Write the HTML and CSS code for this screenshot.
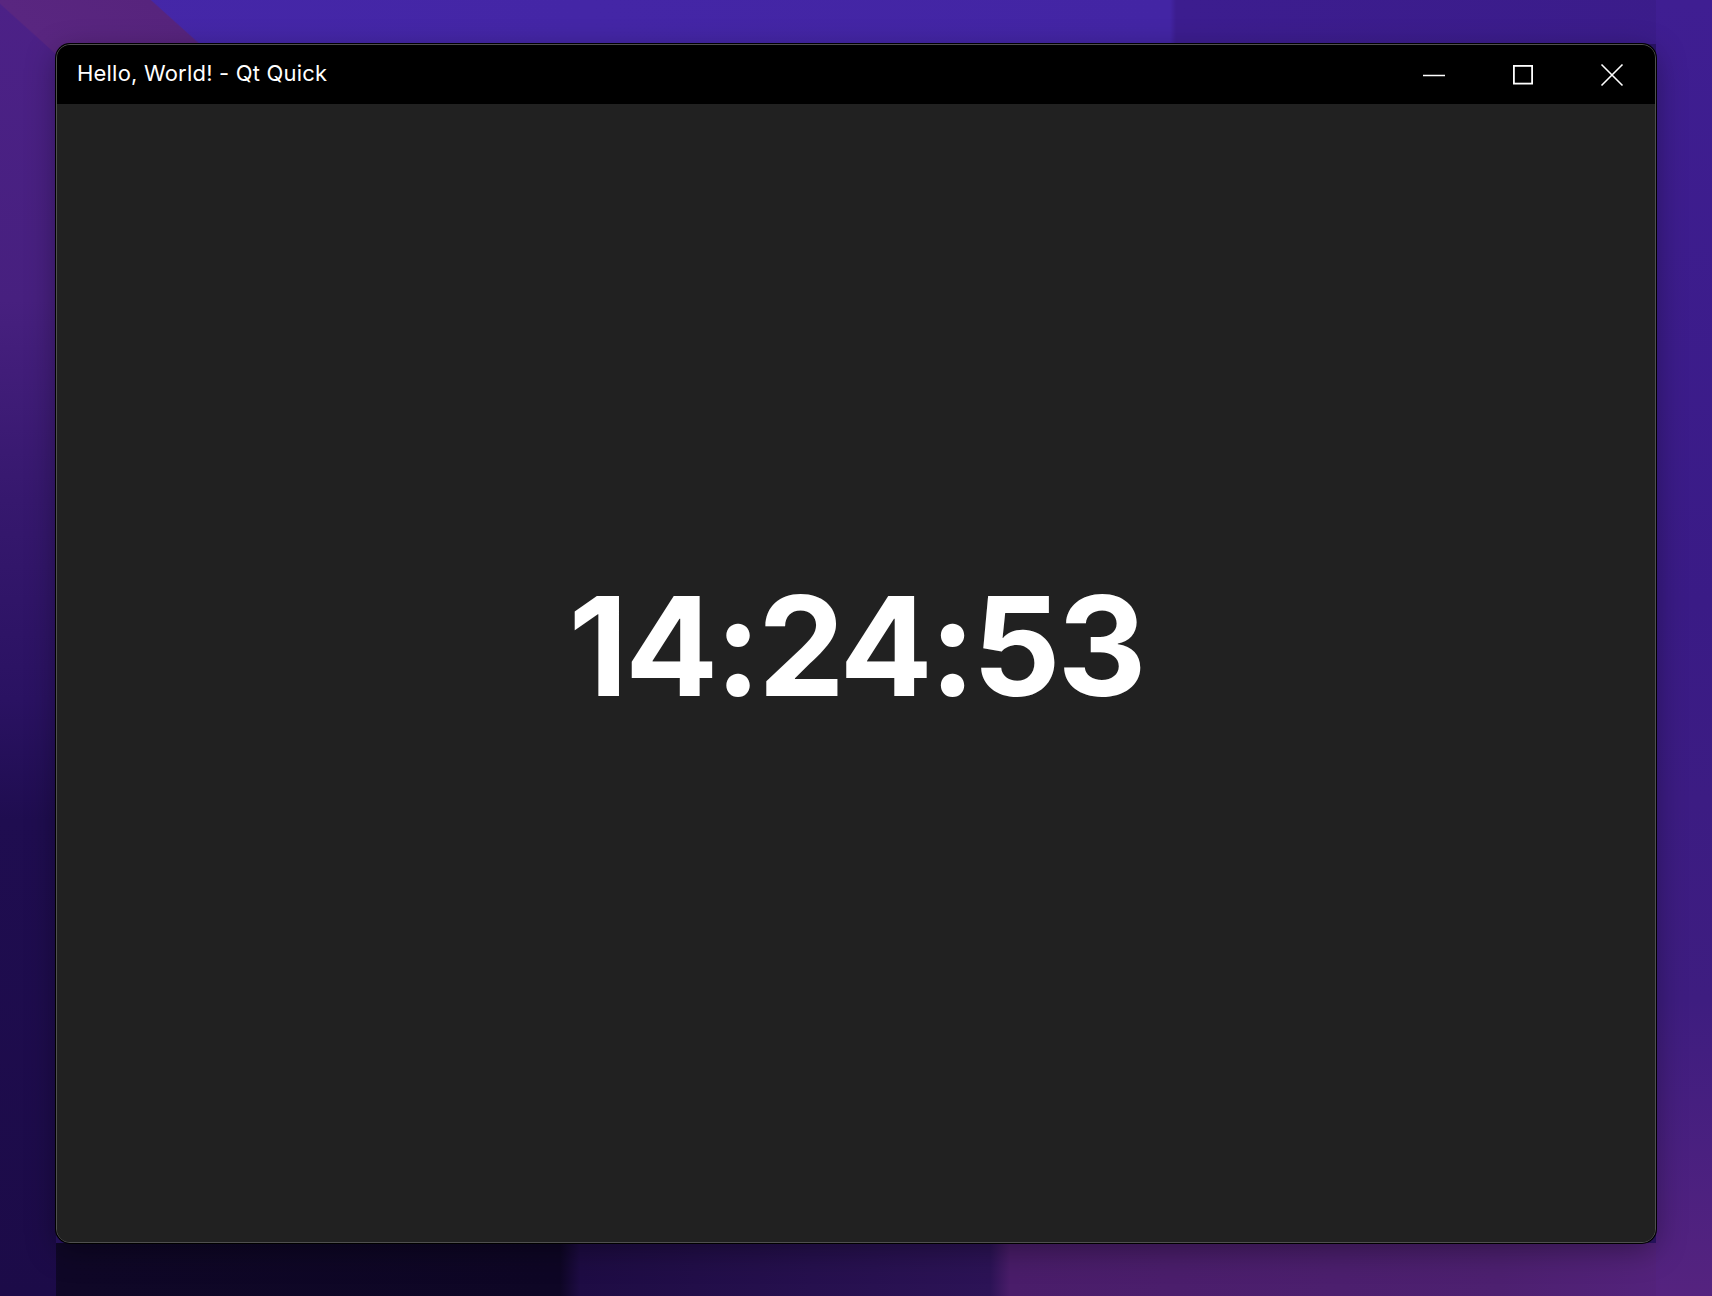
FILE: index.html
```html
<!DOCTYPE html>
<html lang="en">
<head>
<meta charset="utf-8">
<title>Hello, World! - Qt Quick</title>
<link rel="stylesheet" href="styles.css">
</head>
<body>
<div class="desktop">
  <div class="window">
    <div class="titlebar">
      <div class="title">Hello, World! - Qt Quick</div>
      <div class="controls">
        <div class="ctrl">
          <svg width="24" height="24" viewBox="0 0 24 24"><path d="M1 12.5 H23" stroke="#fff" stroke-width="1.6" fill="none"/></svg>
        </div>
        <div class="ctrl">
          <svg width="24" height="24" viewBox="0 0 24 24"><rect x="2.9" y="2.9" width="18.2" height="17.7" stroke="#fff" stroke-width="1.8" fill="none"/></svg>
        </div>
        <div class="ctrl">
          <svg width="24" height="24" viewBox="0 0 24 24"><path d="M1.5 1.5 L22.5 22.5 M22.5 1.5 L1.5 22.5" stroke="#fff" stroke-width="1.6" fill="none"/></svg>
        </div>
      </div>
    </div>
    <div class="content">
      <div class="clock">14:24:53</div>
    </div>
  </div>
</div>
</body>
</html>
```

FILE: styles.css
```css
html, body {
  margin: 0;
  padding: 0;
}

body {
  width: 1712px;
  height: 1296px;
  overflow: hidden;
  font-family: Inter, "Liberation Sans", Arial, sans-serif;
}

.desktop {
  box-sizing: border-box;
  width: 1712px;
  height: 1296px;
  padding: 44px 56px 53px 56px;
  background:
    linear-gradient(42deg, rgba(0,0,0,0) 0, rgba(0,0,0,0) 40%, #592680 40.4%, #57247d 68.6%, rgba(0,0,0,0) 69%) 0 0 / 320px 200px no-repeat,
    linear-gradient(180deg, #4c2187 0, #47207f 300px, #36186e 500px, #2a1262 700px, #1f0d50 820px, #1c0b48 100%) 0 0 / 56px 100% no-repeat,
    linear-gradient(180deg, #3f1e92 0, #3a1b86 600px, #3e1d80 1000px, #55237f 100%) 100% 0 / 56px 100% no-repeat,
    linear-gradient(90deg, #1d0c48 0, #0f0727 60px, #0e0625 560px, #1e0c44 580px, #2c1356 990px, #4a1d6a 1010px, #4d2070 1500px, #55237f 100%) 0 100% / 100% 53px no-repeat,
    linear-gradient(90deg, #4527a8 0, #4325a4 1170px, #3c1d8f 1176px, #3b1c8a 100%) 0 0 / 100% 44px no-repeat,
    #2a1466;
}

.window {
  box-sizing: border-box;
  width: 1600px;
  height: 1199px;
  display: flex;
  flex-direction: column;
  border: 1px solid #4f4f4f;
  border-radius: 14px;
  box-shadow: 0 0 0 1px #000, 0 8px 30px rgba(0,0,0,0.35);
  overflow: hidden;
  background: #212121;
}

.titlebar {
  height: 59px;
  flex: 0 0 59px;
  background: #000;
  display: flex;
  align-items: center;
  justify-content: space-between;
  padding-left: 20px;
}

.title {
  color: #fff;
  font-size: 22px;
  line-height: 1;
  letter-spacing: 0.2px;
  padding-bottom: 3px;
}

.controls {
  display: flex;
  height: 100%;
  margin-right: -1px;
}

.ctrl {
  width: 89px;
  height: 100%;
  display: flex;
  align-items: center;
  justify-content: center;
}

.ctrl svg {
  display: block;
}

.content {
  flex: 1;
  display: flex;
  align-items: center;
  justify-content: center;
  background: #212121;
}

.clock {
  color: #fff;
  font-weight: 700;
  font-size: 138px;
  letter-spacing: -3.2px;
  margin-bottom: 55px;
}
```
